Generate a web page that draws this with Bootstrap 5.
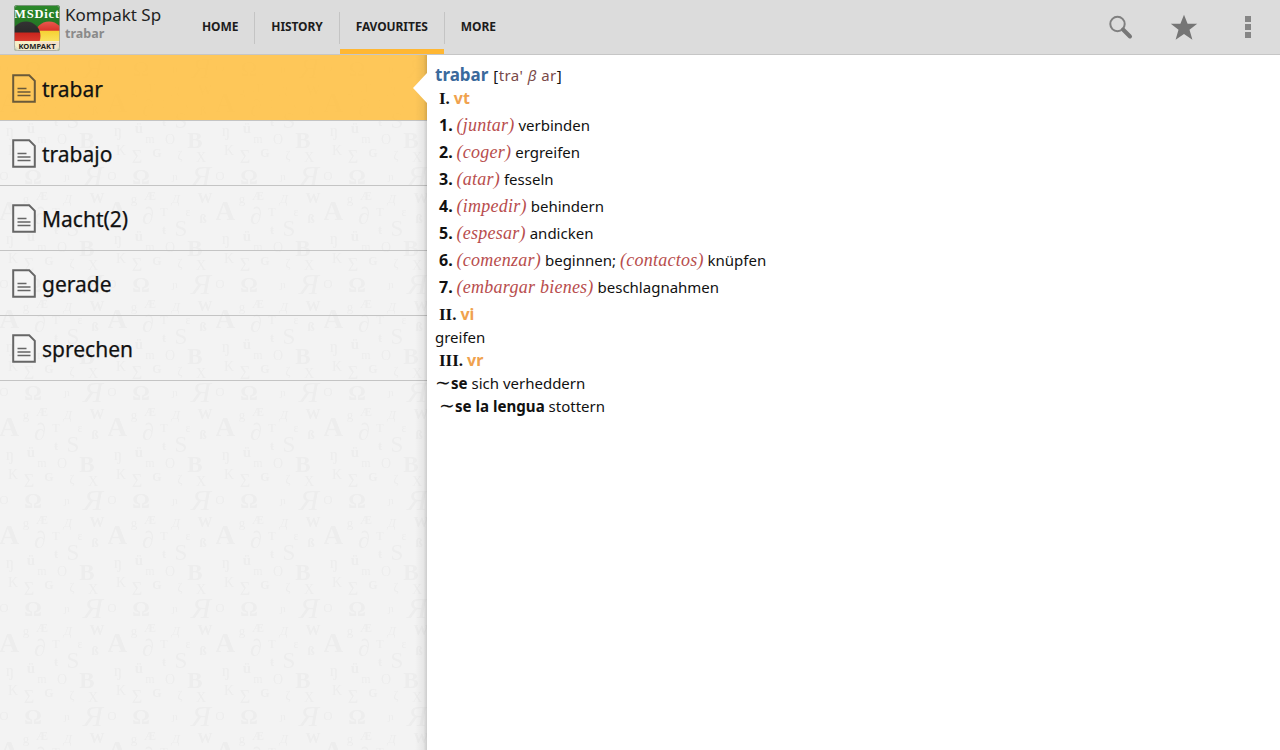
<!DOCTYPE html>
<html lang="es">
<head>
<meta charset="utf-8">
<title>MSDict Kompakt Sp</title>
<link href="https://cdn.jsdelivr.net/npm/bootstrap@5.3.0/dist/css/bootstrap.min.css" rel="stylesheet">
<style>
html,body{height:100%;overflow:hidden}
body{font-family:"Noto Sans","Open Sans",sans-serif;background:#fff;color:#000}
.shell{width:1280px;height:750px}
.topbar{height:55px;background:#dcdcdc;border-bottom:1px solid #c6c6c6;flex:none}
.brand-logo{margin-left:14px;margin-top:5px;flex:none}
.brand-text{margin-left:4px;width:118px;margin-top:-8px}
.brand-title{font-size:17px;line-height:21px;color:#222;white-space:nowrap}
.brand-sub{font-size:12.5px;font-weight:700;line-height:18px;color:#8a8a8a}
.tabbar{height:54px;margin-left:2px}
.tabitem{position:relative;height:54px;font-size:12px;font-weight:700;letter-spacing:-.1px;color:#1c1c1c;text-transform:uppercase;padding:0 16px;display:flex;align-items:center;text-decoration:none;border-left:1px solid transparent}
.tabitem + .tabitem::before{content:"";position:absolute;left:-1px;top:12px;height:32px;width:1px;background:#c4c4c4}
.tabitem.on{box-shadow:inset 0 -5px 0 #ffb733}
.actions{margin-left:auto}
.action{width:64px;height:54px;display:flex;align-items:center;justify-content:center}
.main-area{height:695px}
.side{position:relative;width:427px;flex:none;background:#f3f3f3;overflow:hidden}
.glyphs{position:absolute;left:0;top:0;width:427px;height:695px}
.side-shade{position:absolute;right:0;top:0;bottom:0;width:12px;background:linear-gradient(to right,rgba(0,0,0,0),rgba(0,0,0,.05) 70%,rgba(0,0,0,.16))}
.word-list{position:relative;list-style:none;margin:0;padding:0}
.word-row{height:65px;border-bottom:1px solid #c4c4c4;display:flex;align-items:center;padding-left:12px;font-size:21px;color:#111;padding-top:1px;-webkit-text-stroke:.25px #111}
.word-row svg{margin-right:6px;flex:none}
.word-row span{padding-top:2px}
.word-row.on{height:66px;background:rgba(254,196,80,.95)}
.word-row.on span{padding-top:4px}
.notch{position:absolute;right:0;top:18px;width:0;height:0;border-top:15px solid transparent;border-bottom:15px solid transparent;border-right:14px solid #fff}
.entry{flex:1;background:#fff;padding:8px 8px;font-size:15px;line-height:23px;color:#111}
.entry-line{white-space:nowrap;height:23px}
.first-line{margin-bottom:1px}
.pos-line{margin-bottom:2px}
.sense{height:27px;line-height:27px;padding-left:4px}
.after-sense{margin-top:-2px}
.headword{font-size:17px;font-weight:700;color:#3a6a9c}
.phon{color:#7a4a4a;letter-spacing:.45px;margin-left:1px}
.phon b{color:#111;font-weight:400}
.numr{font-family:"Liberation Serif",serif;font-weight:700;font-size:17px;color:#111}
.num{font-weight:700;font-size:16px;color:#111}
.pos{font-weight:700;font-size:16px;color:#f0a24e}
.gloss{font-family:"Liberation Serif",serif;font-style:italic;font-size:18px;color:#b84d4d;letter-spacing:.25px}
.indent{padding-left:4px}
.phrase{font-weight:700;font-size:15.1px}
.tld{font-weight:400;font-size:19px;line-height:1}
</style>
</head>
<body>
<div class="shell d-flex flex-column">
  <header class="topbar d-flex">
    <svg class="brand-logo" width="47" height="47" viewBox="0 0 47 47" role="img" aria-label="MSDict Kompakt">
      <defs>
        <clipPath id="lc"><rect x="0" y="0" width="46" height="46" rx="3"/></clipPath>
        <linearGradient id="gr" x1="0" y1="0" x2="0" y2="1"><stop offset="0" stop-color="#2c8a2a"/><stop offset="1" stop-color="#1b5a1e"/></linearGradient>
        <linearGradient id="de" x1="0" y1="0" x2="0" y2="1"><stop offset="0" stop-color="#333"/><stop offset=".36" stop-color="#2a2a2a"/><stop offset=".4" stop-color="#c8261e"/><stop offset=".66" stop-color="#d8392c"/><stop offset=".7" stop-color="#f4cf2e"/><stop offset="1" stop-color="#fbe46a"/></linearGradient>
        <linearGradient id="es" x1="0" y1="0" x2="0" y2="1"><stop offset="0" stop-color="#e8584e"/><stop offset=".3" stop-color="#d9352d"/><stop offset=".34" stop-color="#f6d235"/><stop offset=".68" stop-color="#fbe25c"/><stop offset=".72" stop-color="#d9352d"/><stop offset="1" stop-color="#ee7a70"/></linearGradient>
      </defs>
      <g clip-path="url(#lc)">
        <rect width="46" height="46" fill="url(#gr)"/>
        <circle cx="35" cy="31" r="14.5" fill="url(#es)"/>
        <circle cx="12" cy="31" r="14.5" fill="url(#de)"/>
        <rect x="0" y="36" width="46" height="10" fill="#f6f2d8" opacity=".9"/>
        <text x="23" y="12.5" text-anchor="middle" font-family="Liberation Serif,serif" font-weight="700" font-size="12.5" letter-spacing=".8" fill="#fff">MSDict</text>
        <text x="23" y="44" text-anchor="middle" font-family="Noto Sans,sans-serif" font-weight="700" font-size="7.6" fill="#222">KOMPAKT</text>
      </g>
      <rect x=".5" y=".5" width="45" height="45" rx="3" fill="none" stroke="#9a9a9a" stroke-opacity=".7"/>
    </svg>
    <div class="brand-text d-flex flex-column justify-content-center">
      <div class="brand-title">Kompakt Sp</div>
      <div class="brand-sub">trabar</div>
    </div>
    <nav class="tabbar d-flex">
      <a class="tabitem" href="#">Home</a>
      <a class="tabitem" href="#">History</a>
      <a class="tabitem on" href="#">Favourites</a>
      <a class="tabitem" href="#">More</a>
    </nav>
    <div class="actions d-flex">
      <div class="action">
        <svg width="26" height="26" viewBox="0 0 26 26" role="img" aria-label="Search"><circle cx="10.5" cy="10" r="7.2" fill="none" stroke="#808080" stroke-width="2"/><path d="M16 15.5l7 7" stroke="#777" stroke-width="4" stroke-linecap="round"/></svg>
      </div>
      <div class="action">
        <svg width="28" height="27" viewBox="0 0 28 27" role="img" aria-label="Favourite"><path d="M14 .8l3.6 9h9.6l-7.7 6 2.9 10-8.4-5.8-8.4 5.8 2.9-10-7.7-6h9.6z" fill="#757575"/></svg>
      </div>
      <div class="action">
        <svg width="8" height="24" viewBox="0 0 8 24" role="img" aria-label="More"><rect x="1" y="1" width="6" height="6" fill="#868686"/><rect x="1" y="9" width="6" height="6" fill="#868686"/><rect x="1" y="17" width="6" height="6" fill="#868686"/></svg>
      </div>
    </div>
  </header>
  <div class="main-area d-flex">
    <aside class="side">
      <svg class="glyphs" aria-hidden="true">
        <defs>
          <pattern id="tile" x="0" y="1" width="108" height="108" patternUnits="userSpaceOnUse">
            <g font-family="Liberation Serif,serif" fill="#ededed" text-anchor="middle">
              <text x="33" y="20" font-size="22" font-weight="700">Ω</text>
              <text x="93" y="22" font-size="30" font-style="italic">Я</text>
              <text x="67" y="16" font-size="11">ɲ</text>
              <text x="4" y="16" font-size="13">O</text>
              <text x="26" y="39" font-size="13">g</text>
              <text x="42" y="36" font-size="12" font-weight="700">Æ</text>
              <text x="68" y="39" font-size="13" font-style="italic">Д</text>
              <text x="97" y="39" font-size="15" font-weight="700">W</text>
              <text x="9" y="56" font-size="28" font-weight="700">A</text>
              <text x="40" y="60" font-size="24">∂</text>
              <text x="56" y="52" font-size="12">T</text>
              <text x="80" y="52" font-size="12">ε</text>
              <text x="95" y="59" font-size="13" font-weight="700">ß</text>
              <text x="10" y="80" font-size="17">ŋ</text>
              <text x="31" y="77" font-size="15" font-weight="700">ü</text>
              <text x="56" y="70" font-size="12" font-weight="700">ŧ</text>
              <text x="73" y="72" font-size="23">S</text>
              <text x="87" y="92" font-size="23" font-weight="700">B</text>
              <text x="42" y="87" font-size="12">m</text>
              <text x="62" y="88" font-size="14">O</text>
              <text x="13" y="99" font-size="14">K</text>
              <text x="29" y="107" font-size="18">Σ</text>
              <text x="49" y="101" font-size="12" font-weight="700">G</text>
              <text x="72" y="103" font-size="12">ζ</text>
              <text x="93" y="106" font-size="14">X</text>
            </g>
          </pattern>
        </defs>
        <rect width="427" height="695" fill="url(#tile)"/>
      </svg>
      <ul class="word-list">
        <li class="word-row on"><svg width="24" height="29" viewBox="0 0 24 29" aria-hidden="true"><path d="M1.2 1.2h16l5.6 5.6v21H1.2z" fill="none" stroke="#6a5a3a" stroke-width="2"/><path d="M5.5 14.5h9M5.5 18h13M5.5 21.5h13" stroke="#6a5a3a" stroke-width="1.6"/></svg><span>trabar</span></li>
        <li class="word-row"><svg width="24" height="29" viewBox="0 0 24 29" aria-hidden="true"><path d="M1.2 1.2h16l5.6 5.6v21H1.2z" fill="#f5f5f5" stroke="#666" stroke-width="2"/><path d="M5.5 14.5h9M5.5 18h13M5.5 21.5h13" stroke="#666" stroke-width="1.6"/></svg><span>trabajo</span></li>
        <li class="word-row"><svg width="24" height="29" viewBox="0 0 24 29" aria-hidden="true"><path d="M1.2 1.2h16l5.6 5.6v21H1.2z" fill="#f5f5f5" stroke="#666" stroke-width="2"/><path d="M5.5 14.5h9M5.5 18h13M5.5 21.5h13" stroke="#666" stroke-width="1.6"/></svg><span>Macht(2)</span></li>
        <li class="word-row"><svg width="24" height="29" viewBox="0 0 24 29" aria-hidden="true"><path d="M1.2 1.2h16l5.6 5.6v21H1.2z" fill="#f5f5f5" stroke="#666" stroke-width="2"/><path d="M5.5 14.5h9M5.5 18h13M5.5 21.5h13" stroke="#666" stroke-width="1.6"/></svg><span>gerade</span></li>
        <li class="word-row"><svg width="24" height="29" viewBox="0 0 24 29" aria-hidden="true"><path d="M1.2 1.2h16l5.6 5.6v21H1.2z" fill="#f5f5f5" stroke="#666" stroke-width="2"/><path d="M5.5 14.5h9M5.5 18h13M5.5 21.5h13" stroke="#666" stroke-width="1.6"/></svg><span>sprechen</span></li>
      </ul>
      <div class="side-shade"></div>
      <div class="notch"></div>
    </aside>
    <main class="entry">
      <div class="entry-line first-line"><span class="headword">trabar</span> <span class="phon"><b>[</b>tra' <i>β</i> ar<b>]</b></span></div>
      <div class="entry-line indent pos-line"><span class="numr">I.</span> <span class="pos">vt</span></div>
      <div class="entry-line sense"><span class="num">1.</span> <span class="gloss">(juntar)</span> verbinden</div>
      <div class="entry-line sense"><span class="num">2.</span> <span class="gloss">(coger)</span> ergreifen</div>
      <div class="entry-line sense"><span class="num">3.</span> <span class="gloss">(atar)</span> fesseln</div>
      <div class="entry-line sense"><span class="num">4.</span> <span class="gloss">(impedir)</span> behindern</div>
      <div class="entry-line sense"><span class="num">5.</span> <span class="gloss">(espesar)</span> andicken</div>
      <div class="entry-line sense"><span class="num">6.</span> <span class="gloss">(comenzar)</span> beginnen; <span class="gloss">(contactos)</span> knüpfen</div>
      <div class="entry-line sense"><span class="num">7.</span> <span class="gloss">(embargar bienes)</span> beschlagnahmen</div>
      <div class="entry-line sense"><span class="numr">II.</span> <span class="pos">vi</span></div>
      <div class="entry-line after-sense">greifen</div>
      <div class="entry-line indent"><span class="numr">III.</span> <span class="pos">vr</span></div>
      <div class="entry-line"><span class="phrase"><span class="tld">∼</span>se</span> sich verheddern</div>
      <div class="entry-line indent"><span class="phrase"><span class="tld">∼</span>se la lengua</span> stottern</div>
    </main>
  </div>
</div>
<script src="https://cdn.jsdelivr.net/npm/bootstrap@5.3.0/dist/js/bootstrap.bundle.min.js"></script>
</body>
</html>
